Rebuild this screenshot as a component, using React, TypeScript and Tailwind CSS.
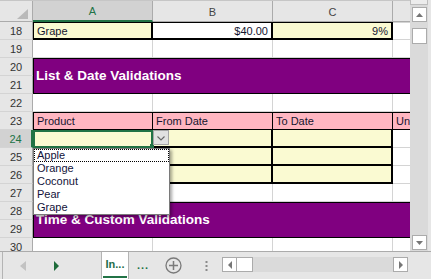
import type { ReactNode } from "react";

const plain = "border-r border-b border-[#d4d4d4] bg-white";
const thickYellow = "border-r-2 border-b-2 border-black bg-[#fafad2]";
const pinkHead = "border-r border-y border-black bg-[#ffb6c1]";

function RowHead({ n, active }: { n: number; active?: boolean }) {
  return (
    <div
      className={`flex h-[18px] w-[33px] shrink-0 items-center justify-center border-b border-[#d4d4d4] pt-px text-[11px] ${
        active
          ? "border-r-2 border-r-[#217346] bg-[#d2d2d2] text-[#217346]"
          : "border-r border-r-[#ababab] bg-[#e6e6e6] text-[#333333]"
      }`}
    >
      {n}
    </div>
  );
}

function Cell({
  className,
  children,
  right,
  w = "w-[120px]",
}: {
  className: string;
  children?: ReactNode;
  right?: boolean;
  w?: string;
}) {
  return (
    <div
      className={`flex h-[18px] shrink-0 items-center overflow-hidden whitespace-nowrap px-[3px] pt-px text-[11px] text-[#14142e] ${w} ${
        right ? "justify-end" : ""
      } ${className}`}
    >
      {children}
    </div>
  );
}

function Row({ n, active, children }: { n: number; active?: boolean; children?: ReactNode }) {
  return (
    <div className="flex h-[18px] shrink-0">
      <RowHead n={n} active={active} />
      {children}
    </div>
  );
}

function PlainRow({ n }: { n: number }) {
  return (
    <Row n={n}>
      <Cell className={plain} />
      <Cell className={plain} />
      <Cell className={plain} />
      <Cell className={plain} />
    </Row>
  );
}

function Banner({ rows, title }: { rows: [number, number]; title: string }) {
  return (
    <div className="flex h-[36px] shrink-0">
      <div className="flex w-[33px] shrink-0 flex-col">
        <RowHead n={rows[0]} />
        <RowHead n={rows[1]} />
      </div>
      <div className="flex h-[36px] w-[400px] shrink-0 items-center border-y border-l border-black bg-[#800080] px-[2px] text-[13.5px] font-bold whitespace-nowrap text-white">
        {title}
      </div>
    </div>
  );
}

function ScrollButton({ dir, className = "" }: { dir: "up" | "down" | "left" | "right"; className?: string }) {
  const pts = {
    up: "0,4 7,4 3.5,0",
    down: "0,0 7,0 3.5,4",
    left: "4,0 4,8 0,4",
    right: "0,0 0,8 4,4",
  }[dir];
  const vertical = dir === "up" || dir === "down";
  return (
    <div className={`flex shrink-0 items-center justify-center border border-[#ababab] bg-white ${className}`}>
      <svg width={vertical ? 7 : 4} height={vertical ? 4 : 8} viewBox={vertical ? "0 0 7 4" : "0 0 4 8"}>
        <polygon points={pts} fill="#767676" />
      </svg>
    </div>
  );
}

const fruits = ["Apple", "Orange", "Coconut", "Pear", "Grape"];

export default function App() {
  return (
    <div className="flex h-[279px] w-[431px] flex-col overflow-hidden bg-[#e6e6e6] font-['Liberation_Sans',Arial,sans-serif]">
      <div className="flex h-[251px] shrink-0">
        {/* sheet */}
        <div className="relative h-[251px] w-[410px] shrink-0 overflow-hidden bg-white">
          <div className="flex flex-col">
            <div className="flex h-[22px] shrink-0 border-t border-[#c6c6c6] bg-[#e6e6e6] text-[11px]">
              <div className="flex w-[33px] shrink-0 items-end justify-end border-r border-b border-[#ababab] pr-[4px] pb-[2px]">
                <svg width="11" height="10" viewBox="0 0 11 10">
                  <polygon points="11,0 11,10 0,10" fill="#b9b9b9" />
                </svg>
              </div>
              <div className="flex w-[120px] shrink-0 items-center justify-center border-r border-r-[#ababab] border-b-2 border-b-[#217346] bg-[#d2d2d2] pt-[2px] text-[#217346]">
                A
              </div>
              <div className="flex w-[120px] shrink-0 items-center justify-center border-r border-b border-[#ababab] pt-[2px] text-[#444444]">
                B
              </div>
              <div className="flex w-[120px] shrink-0 items-center justify-center border-r border-b border-[#ababab] pt-[2px] text-[#444444]">
                C
              </div>
              <div className="flex w-[120px] shrink-0 items-center justify-center border-r border-b border-[#ababab] pt-[2px] text-[#444444]">
                D
              </div>
            </div>

            <Row n={18}>
              <Cell className={`border-l border-t ${thickYellow}`}>Grape</Cell>
              <Cell right className="border-t border-r-2 border-b-2 border-black bg-white">
                $40.00
              </Cell>
              <Cell right className={`border-t ${thickYellow}`}>
                9%
              </Cell>
              <Cell className="border-t border-b border-t-[#d4d4d4] border-b-[#d4d4d4] bg-white" />
            </Row>
            <PlainRow n={19} />
            <Banner rows={[20, 21]} title="List & Date Validations" />
            <PlainRow n={22} />
            <Row n={23}>
              <Cell className={`border-l ${pinkHead}`}>Product</Cell>
              <Cell className={pinkHead}>From Date</Cell>
              <Cell className={pinkHead}>To Date</Cell>
              <Cell className={pinkHead}>Units</Cell>
            </Row>
            <Row n={24} active>
              <Cell className="border-2 border-[#217346] bg-[#fafad2]" />
              <Cell className={thickYellow} />
              <Cell className={thickYellow} />
              <Cell className={plain} />
            </Row>
            <Row n={25}>
              <Cell className={`border-l ${thickYellow}`} />
              <Cell className={thickYellow} />
              <Cell className={thickYellow} />
              <Cell className={plain} />
            </Row>
            <Row n={26}>
              <Cell className={`border-l ${thickYellow}`} />
              <Cell className={thickYellow} />
              <Cell className={thickYellow} />
              <Cell className={plain} />
            </Row>
            <PlainRow n={27} />
            <Banner rows={[28, 29]} title="Time & Custom Validations" />
            <PlainRow n={30} />
          </div>

          {/* fill handle and in-cell dropdown button */}
          <div className="absolute top-[144px] left-[150px] h-[4px] w-[4px] bg-[#217346]" />
          <div className="absolute top-[130px] left-[153px] flex h-[15px] w-[16px] items-center justify-center border border-[#a6a6a6] bg-[#e1e1e1] pt-[2px]">
            <svg width="8" height="5" viewBox="0 0 8 5">
              <polyline points="0.5,0.5 4,4 7.5,0.5" fill="none" stroke="#666666" strokeWidth="1.1" />
            </svg>
          </div>

          {/* validation list */}
          <div className="absolute top-[148px] left-[33px] w-[137px] border border-[#7a7a7a] bg-white shadow-[2px_2px_3px_rgba(0,0,0,0.35)]">
            {fruits.map((f, i) => (
              <div
                key={f}
                className={`flex h-[13px] items-center px-[2px] text-[11px] leading-[13px] text-[#12123a] ${
                  i === 0 ? "border border-dotted border-black" : "border border-transparent"
                }`}
              >
                {f}
              </div>
            ))}
          </div>
        </div>

        {/* vertical scrollbar */}
        <div className="flex h-[251px] w-[18px] shrink-0 flex-col bg-[#dadada]">
          <div className="h-[5px] border-x border-b border-[#bdbdbd] bg-[#ececec]" />
          <ScrollButton dir="up" className="mt-[2px] ml-[2px] h-[15px] w-[15px]" />
          <div className="mt-[6px] ml-[2px] h-[16px] w-[15px] border border-[#ababab] bg-white" />
          <div className="flex-1" />
          <ScrollButton dir="down" className="mb-px ml-[2px] h-[15px] w-[15px]" />
        </div>
        <div className="w-[3px] shrink-0 bg-[#e6e6e6]" />
      </div>

      {/* sheet tabs bar */}
      <div className="flex h-[28px] shrink-0 border-t border-[#ababab] bg-[#e6e6e6] pl-[2px]">
        <div className="flex w-[99px] shrink-0 items-center border-l border-[#b4b4b4]">
          <svg width="6" height="10" viewBox="0 0 6 10" className="ml-[17px]">
            <polygon points="6,0 6,10 0,5" fill="#c2c2c2" />
          </svg>
          <svg width="5" height="10" viewBox="0 0 5 10" className="ml-[28px]">
            <polygon points="0,0 0,10 5,5" fill="#1d6b3a" />
          </svg>
        </div>
        <div className="flex w-[28px] shrink-0 flex-col border-x border-[#b4b4b4] bg-white">
          <div className="flex flex-1 items-center justify-center text-[11px] font-bold text-[#1f6e4a]">In...</div>
          <div className="mx-px mb-px h-[2px] bg-[#217346]" />
        </div>
        <div className="flex w-[36px] shrink-0 items-center pl-[8px] text-[11px] font-bold tracking-[1px] text-[#217346]">
          ...
        </div>
        <div className="flex w-[17px] shrink-0 items-center">
          <svg width="17" height="17" viewBox="0 0 17 17">
            <circle cx="8.5" cy="8.5" r="7.5" fill="none" stroke="#7a7a7a" strokeWidth="1.3" />
            <path d="M4 8.5h9M8.5 4v9" stroke="#7a7a7a" strokeWidth="1.5" />
          </svg>
        </div>
        <div className="flex w-[40px] shrink-0 items-center pl-[23px]">
          <svg width="3" height="12" viewBox="0 0 3 12">
            <rect x="0.5" y="1" width="2" height="2" fill="#8a8a8a" />
            <rect x="0.5" y="5" width="2" height="2" fill="#8a8a8a" />
            <rect x="0.5" y="9" width="2" height="2" fill="#8a8a8a" />
          </svg>
        </div>
        <div className="mt-[5px] flex h-[15px] w-[186px] shrink-0 bg-[#dadada]">
          <ScrollButton dir="left" className="h-[15px] w-[15px]" />
          <div className="h-[15px] w-[16px] border-y border-r border-[#ababab] bg-white" />
          <div className="flex-1" />
          <ScrollButton dir="right" className="h-[15px] w-[15px]" />
        </div>
      </div>
    </div>
  );
}
